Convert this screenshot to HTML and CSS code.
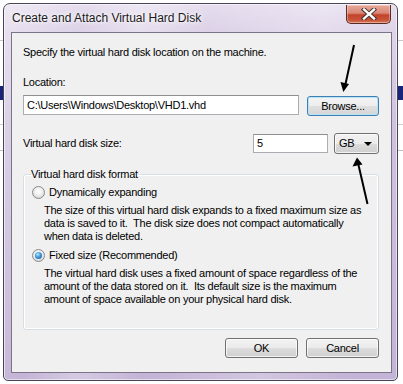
FILE: index.html
```html
<!DOCTYPE html>
<html>
<head>
<meta charset="utf-8">
<title>Create and Attach Virtual Hard Disk</title>
<link rel="stylesheet" href="styles.css">
</head>
<body>
<div class="window">
  <div class="titlebar">
    <span class="title">Create and Attach Virtual Hard Disk</span>
    <div class="close">
      <svg width="16" height="12" viewBox="0 0 16 12">
        <path d="M3 1.5 L13 10.5 M13 1.5 L3 10.5" stroke="#3a2a2a" stroke-width="4.2" stroke-linecap="square"/>
        <path d="M3 1.5 L13 10.5 M13 1.5 L3 10.5" stroke="#ffffff" stroke-width="2.4" stroke-linecap="square"/>
      </svg>
    </div>
  </div>
  <div class="client">
    <div class="line">Specify the virtual hard disk location on the machine.</div>
    <div class="line label-loc">Location:</div>
    <div class="row row-loc">
      <div class="input input-loc">C:\Users\Windows\Desktop\VHD1.vhd</div>
      <div class="btn btn-default">Browse...</div>
    </div>
    <div class="row row-size">
      <div class="line size-label">Virtual hard disk size:</div>
      <div class="input input-size">5</div>
      <div class="btn combo"><span>GB</span><span class="tri"></span></div>
    </div>
    <fieldset class="group">
      <legend>Virtual hard disk format</legend>
      <div class="opt opt-first"><span class="radio"></span><span>Dynamically expanding</span></div>
      <div class="desc">
        <div class="line">The size of this virtual hard disk expands to a fixed maximum size as</div>
        <div class="line">data is saved to it.&nbsp; The disk size does not compact automatically</div>
        <div class="line">when data is deleted.</div>
      </div>
      <div class="opt opt-second"><span class="radio checked"></span><span>Fixed size (Recommended)</span></div>
      <div class="desc">
        <div class="line">The virtual hard disk uses a fixed amount of space regardless of the</div>
        <div class="line">amount of the data stored on it.&nbsp; Its default size is the maximum</div>
        <div class="line">amount of space available on your physical hard disk.</div>
      </div>
    </fieldset>
    <div class="actions">
      <div class="btn">OK</div>
      <div class="btn">Cancel</div>
    </div>
  </div>
</div>
<svg class="arrows" width="403" height="384" viewBox="0 0 403 384">
  <line x1="354" y1="45" x2="345.5" y2="84" stroke="#000" stroke-width="2"/>
  <polygon points="343.3,92 340.5,82 349,84" fill="#000"/>
  <line x1="367.5" y1="204" x2="358.5" y2="165" stroke="#000" stroke-width="2"/>
  <polygon points="357,157.5 352.5,166.5 362.5,164.5" fill="#000"/>
</svg>
</body>
</html>
```

FILE: styles.css
```css
html, body {
  margin: 0;
  padding: 0;
}
body {
  width: 403px;
  height: 384px;
  overflow: hidden;
  position: relative;
  font-family: "Liberation Sans", Arial, sans-serif;
  font-size: 11px;
  color: #000;
  background:
    linear-gradient(to bottom, transparent 86px, #17247a 86px, #17247a 100px, transparent 100px),
    linear-gradient(to bottom, transparent 40px, #c8c8c8 40px, #c8c8c8 41px, transparent 41px),
    linear-gradient(to bottom, transparent 124px, #d0d0d0 124px, #d0d0d0 125px, transparent 125px),
    linear-gradient(to bottom, transparent 150px, #c0c0c0 150px, #c0c0c0 151px, transparent 151px),
    #ffffff;
  padding-top: 3px;
  box-sizing: border-box;
}
.window {
  margin-left: 3px;
  width: 395px;
  height: 378px;
  box-sizing: border-box;
  display: flex;
  flex-direction: column;
  border: 1px solid #4a4556;
  border-radius: 7px 7px 5px 5px;
  background:
    linear-gradient(100deg, rgba(255,255,255,0.35) 0%, rgba(255,255,255,0) 18%, rgba(255,255,255,0.3) 30%, rgba(255,255,255,0) 45%, rgba(255,255,255,0.25) 70%, rgba(255,255,255,0) 90%),
    linear-gradient(to bottom, #e6ddee 0px, #dcd1e7 28px, #cfc2df 120px, #c3b3d6 100%);
  box-shadow: inset 0 0 0 1px rgba(255,255,255,0.55);
}
.titlebar {
  height: 28px;
  flex: none;
  display: flex;
  align-items: flex-start;
  justify-content: space-between;
  padding-left: 8px;
}
.title {
  font-size: 12px;
  line-height: 14px;
  margin-top: 7px;
  color: #1a1a1a;
  text-shadow: 0 0 6px #fff, 0 0 3px #fff;
}
.close {
  margin-top: 1px;
  margin-right: 6px;
  width: 45px;
  height: 19px;
  box-sizing: border-box;
  border: 1px solid #5b2a22;
  border-top: none;
  border-radius: 0 0 5px 5px;
  background: linear-gradient(to bottom, #e9a99b 0%, #d98775 45%, #c3422b 55%, #c8553a 85%, #dc7d60 100%);
  box-shadow: inset 0 0 0 1px rgba(255,255,255,0.35);
  display: flex;
  align-items: center;
  justify-content: center;
}
.client {
  flex: 1;
  margin: 0 5px 7px 7px;
  border: 1px solid #7b7489;
  background: #f0f0f0;
  padding: 13px 12px 13px 11px;
  letter-spacing: -0.25px;
}
.line {
  line-height: 13px;
  white-space: nowrap;
}
.label-loc {
  margin-top: 17px;
}
.row {
  display: flex;
  align-items: flex-start;
}
.row-loc {
  margin-top: 6px;
}
.input {
  box-sizing: border-box;
  height: 20px;
  border: 1px solid #abadb3;
  border-top-color: #8e8f8f;
  background: #fff;
  padding-left: 3px;
  line-height: 18px;
  white-space: nowrap;
}
.input-loc {
  width: 276px;
}
.btn {
  box-sizing: border-box;
  width: 73px;
  height: 20px;
  border: 1px solid #707070;
  border-radius: 3px;
  background: linear-gradient(to bottom, #f2f2f2 0%, #ebebeb 50%, #dddddd 50%, #cfcfcf 100%);
  box-shadow: inset 0 0 0 1px rgba(255,255,255,0.75);
  display: flex;
  align-items: center;
  justify-content: center;
  line-height: 13px;
}
.btn-default {
  margin-left: 8px;
  margin-top: 1px;
  width: 72px;
  border-color: #3c7fb1;
  box-shadow: inset 0 0 0 1px #b8e4fa;
  background: linear-gradient(to bottom, #f4f4f4 0%, #ededed 50%, #e0e0e0 50%, #d6d6d6 100%);
}
.row-size {
  margin-top: 16px;
  align-items: center;
}
.size-label {
  flex: 1;
  margin-top: 1px;
}
.input-size {
  width: 75px;
  height: 19px;
  line-height: 17px;
}
.combo {
  margin-left: 6px;
  width: 45px;
  height: 21px;
  justify-content: space-between;
  padding: 0 6px 0 4px;
  margin-top: 1px;
}
.tri {
  width: 0;
  height: 0;
  border-left: 4px solid transparent;
  border-right: 4px solid transparent;
  border-top: 4px solid #000;
}
.group {
  margin: 14px 0 0 0;
  border: 1px solid #d5dfe5;
  border-radius: 3px;
  padding: 0 8px 23px 8px;
  box-shadow: inset 0 0 0 1px #ffffff;
}
.group legend {
  padding: 0 2px 0 0;
  line-height: 13px;
  margin-left: -1px;
}
.opt {
  display: flex;
  align-items: center;
  gap: 4px;
  line-height: 13px;
}
.opt-first {
  margin-top: 5px;
}
.opt-second {
  margin-top: 6px;
}
.desc {
  margin-left: 12px;
  margin-top: 5px;
}
.radio {
  width: 11px;
  height: 11px;
  border: 1px solid #8a8a8a;
  border-radius: 50%;
  background: radial-gradient(circle at 50% 40%, #ffffff 0%, #eeeeee 45%, #c8c8c8 100%);
  position: relative;
}
.radio.checked::after {
  content: "";
  position: absolute;
  left: 2px;
  top: 2px;
  width: 7px;
  height: 7px;
  border-radius: 50%;
  background: radial-gradient(circle at 40% 35%, #b9e6fd 0%, #3f97d9 45%, #174f8f 100%);
}
.actions {
  display: flex;
  justify-content: flex-end;
  gap: 8px;
  margin-top: 8px;
}
.arrows {
  position: absolute;
  left: 0;
  top: 0;
  pointer-events: none;
}
```
